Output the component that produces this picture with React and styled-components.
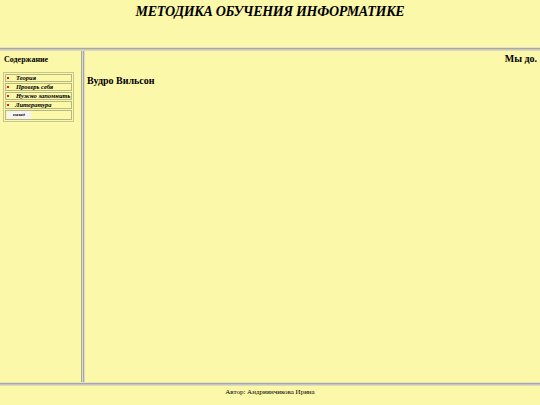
import styled, { createGlobalStyle } from "styled-components";

const GlobalStyle = createGlobalStyle`
  html, body {
    margin: 0;
    padding: 0;
    background: #fbf8aa;
  }
  body {
    font-family: "Liberation Serif", "Times New Roman", serif;
    color: #000;
  }
`;

const Page = styled.div`
  width: 540px;
  height: 405px;
  display: flex;
  flex-direction: column;
  background: #fbf8aa;
  overflow: hidden;
`;

const TopFrame = styled.header`
  height: 47px;
  flex-shrink: 0;
  display: flex;
  justify-content: center;
  align-items: flex-start;
`;

const Title = styled.h1`
  margin: 4px 0 0;
  font-size: 14px;
  letter-spacing: -0.3px;
  font-weight: bold;
  font-style: italic;
`;

const HSplit = styled.div`
  height: 4px;
  flex-shrink: 0;
  background: linear-gradient(#e4e2c8 0 1px, #a9a89c 1px 2px, #c9c8b8 2px 3px, #dcdac4 3px 4px);
`;

const Middle = styled.div`
  flex: 1;
  display: flex;
  min-height: 0;
`;

const LeftFrame = styled.nav`
  width: 81px;
  flex-shrink: 0;
  padding: 4px 3px 0;
  box-sizing: border-box;
`;

const VSplit = styled.div`
  width: 4px;
  flex-shrink: 0;
  background: linear-gradient(90deg, #a9a89c 0 1px, #dcdbd0 1px 2px, #a9a89c 2px 3px, #dcdac4 3px 4px);
`;

const MainFrame = styled.main`
  flex: 1;
  padding: 2px 3px 0 2px;
`;

const NavHeading = styled.h4`
  margin: 0 0 8px 1px;
  font-size: 8px;
  font-weight: bold;
`;

const Menu = styled.table`
  border: 1px solid #c8c690;
  border-collapse: separate;
  border-spacing: 1px;
  width: 71px;
`;

const MenuCell = styled.td`
  border: 1px solid #b9b780;
  height: 6px;
  padding: 0 0 0 1px;
  font-size: 6.5px;
  font-weight: bold;
  font-style: italic;
  white-space: nowrap;
  line-height: 6px;
`;

const Bullet = styled.span`
  display: inline-block;
  width: 2px;
  height: 2px;
  background: #d42020;
  margin: 0 ${(p) => p.$gap}px 1px 0;
  vertical-align: middle;
`;

const BackButton = styled.button`
  display: block;
  font-family: inherit;
  font-size: 5px;
  font-weight: bold;
  font-style: italic;
  background: #f4f4f0;
  border: none;
  padding: 0;
  width: 24px;
  height: 8px;
  margin: 0;
  line-height: 8px;
`;

const Quote = styled.h3`
  margin: 0;
  text-align: right;
  font-size: 10px;
  font-weight: bold;
`;

const Signature = styled.h3`
  margin: 11px 0 0;
  font-size: 10px;
  font-weight: bold;
`;

const Footer = styled.footer`
  height: 19px;
  flex-shrink: 0;
  display: flex;
  justify-content: center;
  align-items: flex-start;
  font-size: 7px;
  padding-top: 2px;
  box-sizing: border-box;
`;

const items = [
  { label: "Теория", gap: 7 },
  { label: "Проверь себя", gap: 7 },
  { label: "Нужно запомнить", gap: 7 },
  { label: "Литература", gap: 6 },
];

export default function App() {
  return (
    <Page>
      <GlobalStyle />
      <TopFrame>
        <Title>МЕТОДИКА ОБУЧЕНИЯ ИНФОРМАТИКЕ</Title>
      </TopFrame>
      <HSplit />
      <Middle>
        <LeftFrame>
          <NavHeading>Содержание</NavHeading>
          <Menu>
            <tbody>
              {items.map((it) => (
                <tr key={it.label}>
                  <MenuCell>
                    <Bullet $gap={it.gap} />
                    {it.label}
                  </MenuCell>
                </tr>
              ))}
              <tr>
                <MenuCell>
                  <BackButton>назад</BackButton>
                </MenuCell>
              </tr>
            </tbody>
          </Menu>
        </LeftFrame>
        <VSplit />
        <MainFrame>
          <Quote>Мы до.</Quote>
          <Signature>Вудро Вильсон</Signature>
        </MainFrame>
      </Middle>
      <HSplit />
      <Footer>Автор: Андриянчикова Ирина</Footer>
    </Page>
  );
}
